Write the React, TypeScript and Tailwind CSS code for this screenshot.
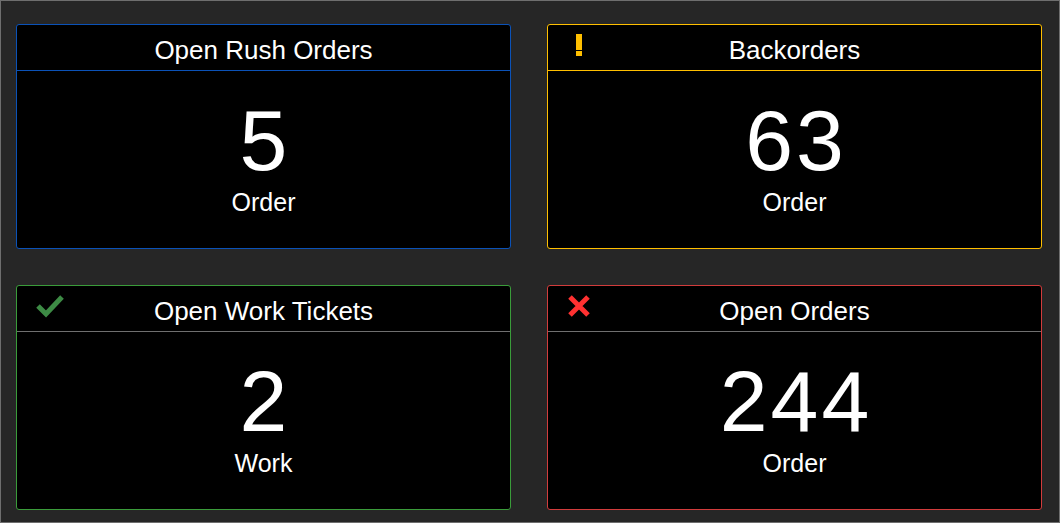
import React from 'react';

type Status = 'none' | 'warn' | 'ok' | 'error';

interface Tile {
  title: string;
  value: number;
  unit: string;
  status: Status;
}

const tiles: Tile[] = [
  { title: 'Open Rush Orders', value: 5, unit: 'Order', status: 'none' },
  { title: 'Backorders', value: 63, unit: 'Order', status: 'warn' },
  { title: 'Open Work Tickets', value: 2, unit: 'Work', status: 'ok' },
  { title: 'Open Orders', value: 244, unit: 'Order', status: 'error' },
];

// border + divider colours per status
const frame: Record<Status, { card: string; divider: string }> = {
  none: { card: 'border-[#0b52b8]', divider: 'border-[#0b52b8]' },
  warn: { card: 'border-[#ffbf00]', divider: 'border-[#ffbf00]' },
  ok: { card: 'border-[#3a9c3a]', divider: 'border-[#6f6f6f]' },
  error: { card: 'border-[#d23c3c]', divider: 'border-[#6f6f6f]' },
};

function StatusIcon({ status }: { status: Status }) {
  if (status === 'warn') {
    return (
      <svg width="24" height="24" viewBox="0 0 24 24">
        <rect x="9" y="1" width="6" height="16" fill="#ffbf00" />
        <rect x="9" y="18" width="6" height="5" fill="#ffbf00" />
      </svg>
    );
  }
  if (status === 'ok') {
    return (
      <svg width="28" height="24" viewBox="0 0 28 24">
        <path d="M2 12 L10 20 L26 3" fill="none" stroke="#3d8b45" strokeWidth="5" strokeLinejoin="miter" />
      </svg>
    );
  }
  if (status === 'error') {
    return (
      <svg width="24" height="24" viewBox="0 0 24 24">
        <path d="M3 3 L21 21 M21 3 L3 21" stroke="#ff3131" strokeWidth="5" />
      </svg>
    );
  }
  return null;
}

function TileCard({ tile }: { tile: Tile }) {
  const c = frame[tile.status];
  return (
    <div className={`relative flex h-[225px] flex-col rounded-[3px] border bg-black ${c.card}`}>
      {tile.status !== 'none' && (
        <div className="absolute left-[19px] top-[8px]">
          <StatusIcon status={tile.status} />
        </div>
      )}
      <div className={`h-[46px] border-b pt-[11px] text-center text-[26px] leading-[1.15] text-white ${c.divider}`}>
        {tile.title}
      </div>
      <div className="flex flex-1 flex-col items-center justify-center gap-[5px] pb-[6px] text-white">
        {/* tracking adds space after the last digit too, pl evens it out */}
        <div className="pl-[3px] text-[86px] leading-none tracking-[3px]">{tile.value}</div>
        <div className="text-[25px] leading-[1.15]">{tile.unit}</div>
      </div>
    </div>
  );
}

export default function App() {
  return (
    <div
      className="h-[523px] w-[1060px] border border-[#6e6e6e] bg-[#262626] pl-[15px] pt-[23px]"
      style={{ fontFamily: '"Liberation Sans", Arial, sans-serif' }}
    >
      <div className="grid grid-cols-[495px_495px] gap-[36px]">
        {tiles.map(t => (
          <TileCard key={t.title} tile={t} />
        ))}
      </div>
    </div>
  );
}
